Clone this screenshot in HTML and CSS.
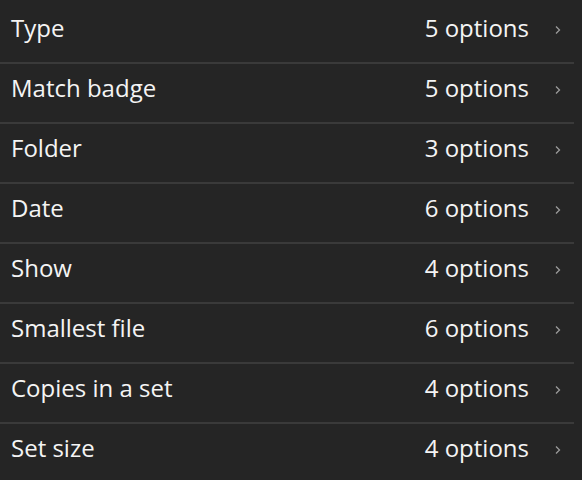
FILE: index.html
```html
<!DOCTYPE html>
<html lang="en">
<head>
<meta charset="utf-8">
<title>Filters</title>
<link rel="stylesheet" href="styles.css">
</head>
<body>
<ul class="list">
  <li class="row"><span class="label">Type</span><span class="value">5 options</span><svg class="chev" viewBox="0 0 6 10" width="6" height="10"><path d="M1 1.5 L4.5 5 L1 8.5" fill="none" stroke="currentColor" stroke-width="1.3"/></svg></li>
  <li class="row"><span class="label">Match badge</span><span class="value">5 options</span><svg class="chev" viewBox="0 0 6 10" width="6" height="10"><path d="M1 1.5 L4.5 5 L1 8.5" fill="none" stroke="currentColor" stroke-width="1.3"/></svg></li>
  <li class="row"><span class="label">Folder</span><span class="value">3 options</span><svg class="chev" viewBox="0 0 6 10" width="6" height="10"><path d="M1 1.5 L4.5 5 L1 8.5" fill="none" stroke="currentColor" stroke-width="1.3"/></svg></li>
  <li class="row"><span class="label">Date</span><span class="value">6 options</span><svg class="chev" viewBox="0 0 6 10" width="6" height="10"><path d="M1 1.5 L4.5 5 L1 8.5" fill="none" stroke="currentColor" stroke-width="1.3"/></svg></li>
  <li class="row"><span class="label">Show</span><span class="value">4 options</span><svg class="chev" viewBox="0 0 6 10" width="6" height="10"><path d="M1 1.5 L4.5 5 L1 8.5" fill="none" stroke="currentColor" stroke-width="1.3"/></svg></li>
  <li class="row"><span class="label">Smallest file</span><span class="value">6 options</span><svg class="chev" viewBox="0 0 6 10" width="6" height="10"><path d="M1 1.5 L4.5 5 L1 8.5" fill="none" stroke="currentColor" stroke-width="1.3"/></svg></li>
  <li class="row"><span class="label">Copies in a set</span><span class="value">4 options</span><svg class="chev" viewBox="0 0 6 10" width="6" height="10"><path d="M1 1.5 L4.5 5 L1 8.5" fill="none" stroke="currentColor" stroke-width="1.3"/></svg></li>
  <li class="row"><span class="label">Set size</span><span class="value">4 options</span><svg class="chev" viewBox="0 0 6 10" width="6" height="10"><path d="M1 1.5 L4.5 5 L1 8.5" fill="none" stroke="currentColor" stroke-width="1.3"/></svg></li>
</ul>
</body>
</html>
```
FILE: styles.css
```css
html, body {
  margin: 0;
  padding: 0;
  height: 100%;
  overflow: hidden;
  background: #252525;
}
body {
  font-family: "Open Sans", "Noto Sans", sans-serif;
  color: #f4f4f4;
}
.list {
  list-style: none;
  margin: 0;
  padding: 4px 8px 0 0;
}
.row {
  display: flex;
  align-items: center;
  box-sizing: content-box;
  height: 47px;
  padding: 0 13px 11px 11px;
  border-bottom: 2px solid #3a3a3a;
  font-size: 24px;
}
.label {
  flex: 1;
}
.value {
  margin-right: 26px;
}
.chev {
  color: #9a9a9a;
  flex: none;
  margin-top: 5px;
}
```
